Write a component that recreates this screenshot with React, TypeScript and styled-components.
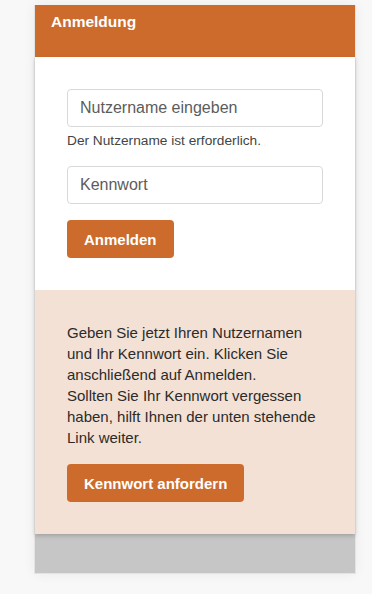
import React from "react";
import styled, { createGlobalStyle } from "styled-components";

const Global = createGlobalStyle`
  html, body { margin: 0; padding: 0; background: #f8f8f8; }
  body { font-family: "Liberation Sans", Arial, sans-serif; }
  * { box-sizing: border-box; }
`;

const Page = styled.div`
  width: 372px;
  height: 594px;
  padding: 5px 0 0 34px;
`;

const Card = styled.div`
  width: 322px;
  display: flex;
  flex-direction: column;
  border: 1px solid #e3e3e3;
  border-top: none;
  box-shadow: 0 0 12px rgba(0, 0, 0, 0.06);
  background: #c6c6c6;
`;

const Header = styled.div`
  height: 52px;
  background: #cc6b2c;
  color: #fff;
  padding: 5px 16px 0;
  font-size: 15.5px;
  line-height: 24px;
  font-weight: bold;
`;

const Body = styled.div`
  position: relative;
  z-index: 1;
  box-shadow: 0 2px 4px rgba(0, 0, 0, 0.18);
`;

const Section = styled.div<{ $tone: "white" | "peach" }>`
  background: ${(p) => (p.$tone === "white" ? "#ffffff" : "#f4e1d5")};
  padding: 32px 32px;
  display: flex;
  flex-direction: column;
  align-items: flex-start;
`;

const Input = styled.input`
  width: 256px;
  height: 38px;
  border: 1px solid #d9d9d9;
  border-radius: 4px;
  padding: 0 12px;
  font-family: "Liberation Sans", Arial, sans-serif;
  font-size: 16px;
  color: #555;
  background: #fff;
  outline: none;
  &::placeholder { color: #5c5c5c; }
`;

const Help = styled.div`
  font-size: 13.7px;
  line-height: 20px;
  color: #444;
  margin: 4px 0 15px;
`;

const Button = styled.button<{ $mt: number }>`
  margin-top: ${(p) => p.$mt}px;
  height: 38px;
  padding: 0 17px;
  border: none;
  border-radius: 4px;
  background: #cc6b2c;
  color: #fff;
  font-family: "Liberation Sans", Arial, sans-serif;
  font-size: 15px;
  font-weight: bold;
  cursor: pointer;
`;

const Text = styled.p`
  margin: 0;
  font-size: 15px;
  line-height: 21px;
  color: #2b2b2b;
  width: 258px;
`;

const Footer = styled.div`
  height: 39px;
  background: #c6c6c6;
`;

export default function App() {
  return (
    <Page>
      <Global />
      <Card>
        <Header>Anmeldung</Header>
        <Body>
          <Section $tone="white">
            <Input placeholder="Nutzername eingeben" />
            <Help>Der Nutzername ist erforderlich.</Help>
            <Input placeholder="Kennwort" type="password" />
            <Button $mt={16}>Anmelden</Button>
          </Section>
          <Section $tone="peach">
            <Text>
              Geben Sie jetzt Ihren Nutzernamen und Ihr Kennwort ein. Klicken Sie anschließend auf Anmelden.
              <br />
              Sollten Sie Ihr Kennwort vergessen haben, hilft Ihnen der unten stehende Link weiter.
            </Text>
            <Button $mt={16}>Kennwort anfordern</Button>
          </Section>
        </Body>
        <Footer />
      </Card>
    </Page>
  );
}
